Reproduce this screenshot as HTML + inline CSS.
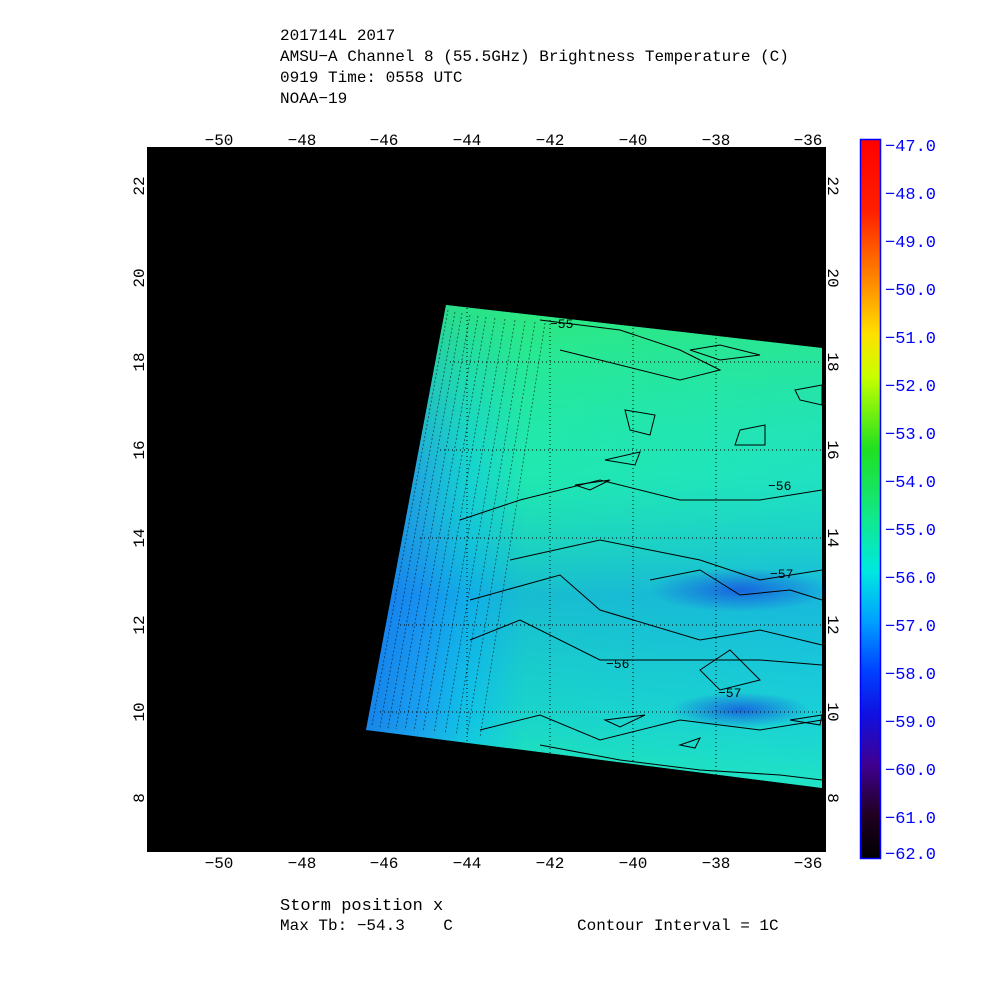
<!DOCTYPE html>
<html><head><style>
html,body{margin:0;padding:0;background:#fff;width:1000px;height:1000px;overflow:hidden}
svg{display:block}
text{font-family:"Liberation Mono",monospace;white-space:pre}
</style></head><body>
<svg width="1000" height="1000" viewBox="0 0 1000 1000" xmlns="http://www.w3.org/2000/svg">
<defs>
<linearGradient id="cb" x1="0" y1="0" x2="0" y2="1">
<stop offset="0" stop-color="#ff0000"/>
<stop offset="0.1" stop-color="#ff2000"/>
<stop offset="0.2" stop-color="#ff8c00"/>
<stop offset="0.27" stop-color="#ffe000"/>
<stop offset="0.33" stop-color="#c8ff00"/>
<stop offset="0.43" stop-color="#20e020"/>
<stop offset="0.53" stop-color="#10e890"/>
<stop offset="0.6" stop-color="#00e8e0"/>
<stop offset="0.67" stop-color="#00a0ff"/>
<stop offset="0.74" stop-color="#0040ff"/>
<stop offset="0.8" stop-color="#1010e0"/>
<stop offset="0.87" stop-color="#400090"/>
<stop offset="0.94" stop-color="#200020"/>
<stop offset="1" stop-color="#000000"/>
</linearGradient>
<linearGradient id="dg" x1="0" y1="0" x2="1" y2="0">
<stop offset="0" stop-color="#1a60e8"/>
<stop offset="0.12" stop-color="#1e90f0"/>
<stop offset="0.22" stop-color="#10c8e0"/>
<stop offset="0.35" stop-color="#20e8b0"/>
<stop offset="1" stop-color="#20e0c8"/>
</linearGradient>
<linearGradient id="dv" x1="0" y1="0" x2="0" y2="1">
<stop offset="0" stop-color="#30e870" stop-opacity="0.8"/>
<stop offset="0.35" stop-color="#20e8b0" stop-opacity="0.3"/>
<stop offset="0.6" stop-color="#1090f0" stop-opacity="0.5"/>
<stop offset="0.85" stop-color="#10b8f0" stop-opacity="0.4"/>
<stop offset="1" stop-color="#20e8c0" stop-opacity="0.4"/>
</linearGradient>
<radialGradient id="sp" cx="0.5" cy="0.5" r="0.5">
<stop offset="0" stop-color="#1850e0" stop-opacity="0.8"/>
<stop offset="1" stop-color="#1850e0" stop-opacity="0"/>
</radialGradient>
</defs>
<g font-size="16" fill="#000">
<text x="280" y="40">201714L 2017</text>
<text x="280" y="61">AMSU−A Channel 8 (55.5GHz) Brightness Temperature (C)</text>
<text x="280" y="82">0919 Time: 0558 UTC</text>
<text x="280" y="103">NOAA−19</text>
</g>
<rect x="147" y="147" width="679" height="705" fill="#000"/>
<polygon points="446,305 822,348 822,788 366,730" fill="url(#dg)"/>
<polygon points="446,305 822,348 822,788 366,730" fill="url(#dv)"/>
<ellipse cx="740" cy="590" rx="90" ry="22" fill="url(#sp)"/>
<ellipse cx="740" cy="710" rx="70" ry="18" fill="url(#sp)"/>
<g stroke="#000" stroke-width="1" stroke-dasharray="1,3" fill="none">
<line x1="467" y1="300" x2="467" y2="745"/><line x1="550" y1="300" x2="550" y2="760"/>
<line x1="633" y1="320" x2="633" y2="770"/><line x1="716" y1="330" x2="716" y2="780"/>
<line x1="380" y1="712" x2="822" y2="712"/><line x1="400" y1="625" x2="822" y2="625"/>
<line x1="420" y1="538" x2="822" y2="538"/><line x1="440" y1="450" x2="822" y2="450"/>
<line x1="450" y1="362" x2="822" y2="362"/>
</g>
<g stroke="#000" stroke-width="0.8" fill="none" opacity="0.6" stroke-dasharray="2,2">
<path d="M448,310 L372,725 M455,312 L380,727 M462,313 L388,728 M470,315 L396,729 M478,316 L405,730 M486,317 L414,731 M495,318 L423,732 M505,319 L434,733 M515,320 L445,734 M525,321 L456,735 M535,322 L467,736 M545,323 L480,737"/>
</g>
<g stroke="#000" stroke-width="1" fill="none">
<path d="M540,320 L620,330 L680,350 L720,370 L680,380 L600,360 L560,350"/>
<path d="M470,600 L560,575 L600,610 L700,640 L760,630 L822,645"/>
<path d="M470,640 L520,620 L600,660 L700,660 L760,660 L822,665"/>
<path d="M460,520 L520,500 L600,480 L680,500 L760,500 L822,490"/>
<path d="M510,560 L600,540 L700,560 L760,580 L822,570"/>
<path d="M650,580 L700,570 L740,595 L790,590 L822,600"/>
<path d="M480,730 L540,715 L600,740 L680,720 L760,730 L822,720"/>
<path d="M540,745 L620,760 L700,770 L780,775 L822,780"/>
<polygon points="625,410 655,415 650,435 630,430"/>
<polygon points="740,430 765,425 765,445 735,445"/>
<polygon points="605,460 640,452 635,465"/>
<polygon points="575,485 610,480 590,490"/>
<polygon points="690,350 720,345 760,355 720,360"/>
<polygon points="795,390 822,385 822,405 800,400"/>
<polygon points="700,670 730,650 760,680 720,690"/>
<polygon points="605,720 645,715 620,727"/>
<polygon points="680,745 700,738 695,748"/>
<polygon points="790,720 822,715 820,725"/>
</g>
<g font-size="13" fill="#000">
<text x="550" y="328">−55</text>
<text x="768" y="490">−56</text>
<text x="770" y="578">−57</text>
<text x="606" y="668">−56</text>
<text x="718" y="697">−57</text>
</g>
<g font-size="16" fill="#000" text-anchor="middle">
<text x="219" y="145">−50</text><text x="302" y="145">−48</text><text x="384" y="145">−46</text>
<text x="467" y="145">−44</text><text x="550" y="145">−42</text><text x="633" y="145">−40</text>
<text x="716" y="145">−38</text><text x="808" y="145">−36</text>
<text x="219" y="868">−50</text><text x="302" y="868">−48</text><text x="384" y="868">−46</text>
<text x="467" y="868">−44</text><text x="550" y="868">−42</text><text x="633" y="868">−40</text>
<text x="716" y="868">−38</text><text x="808" y="868">−36</text>
</g>
<g font-size="16" fill="#000" text-anchor="middle">
<text transform="translate(144,186) rotate(-90)">22</text>
<text transform="translate(144,278) rotate(-90)">20</text>
<text transform="translate(144,362) rotate(-90)">18</text>
<text transform="translate(144,450) rotate(-90)">16</text>
<text transform="translate(144,538) rotate(-90)">14</text>
<text transform="translate(144,625) rotate(-90)">12</text>
<text transform="translate(144,712) rotate(-90)">10</text>
<text transform="translate(144,798) rotate(-90)">8</text>
<text transform="translate(828,186) rotate(90)">22</text>
<text transform="translate(828,278) rotate(90)">20</text>
<text transform="translate(828,362) rotate(90)">18</text>
<text transform="translate(828,450) rotate(90)">16</text>
<text transform="translate(828,538) rotate(90)">14</text>
<text transform="translate(828,625) rotate(90)">12</text>
<text transform="translate(828,712) rotate(90)">10</text>
<text transform="translate(828,798) rotate(90)">8</text>
</g>
<rect x="860.5" y="139.5" width="20" height="719" fill="url(#cb)" stroke="#0000ff" stroke-width="1.5"/>
<g font-size="17" fill="#0000ff">
<text x="885" y="151">−47.0</text><text x="885" y="199">−48.0</text><text x="885" y="247">−49.0</text>
<text x="885" y="295">−50.0</text><text x="885" y="343">−51.0</text><text x="885" y="391">−52.0</text>
<text x="885" y="439">−53.0</text><text x="885" y="487">−54.0</text><text x="885" y="535">−55.0</text>
<text x="885" y="583">−56.0</text><text x="885" y="631">−57.0</text><text x="885" y="679">−58.0</text>
<text x="885" y="727">−59.0</text><text x="885" y="775">−60.0</text><text x="885" y="823">−61.0</text>
<text x="885" y="859">−62.0</text>
</g>
<text x="280" y="910" font-size="17">Storm position x</text>
<text x="280" y="930" font-size="16">Max Tb: −54.3    C</text>
<text x="577" y="930" font-size="16">Contour Interval = 1C</text>
</svg>
</body></html>
